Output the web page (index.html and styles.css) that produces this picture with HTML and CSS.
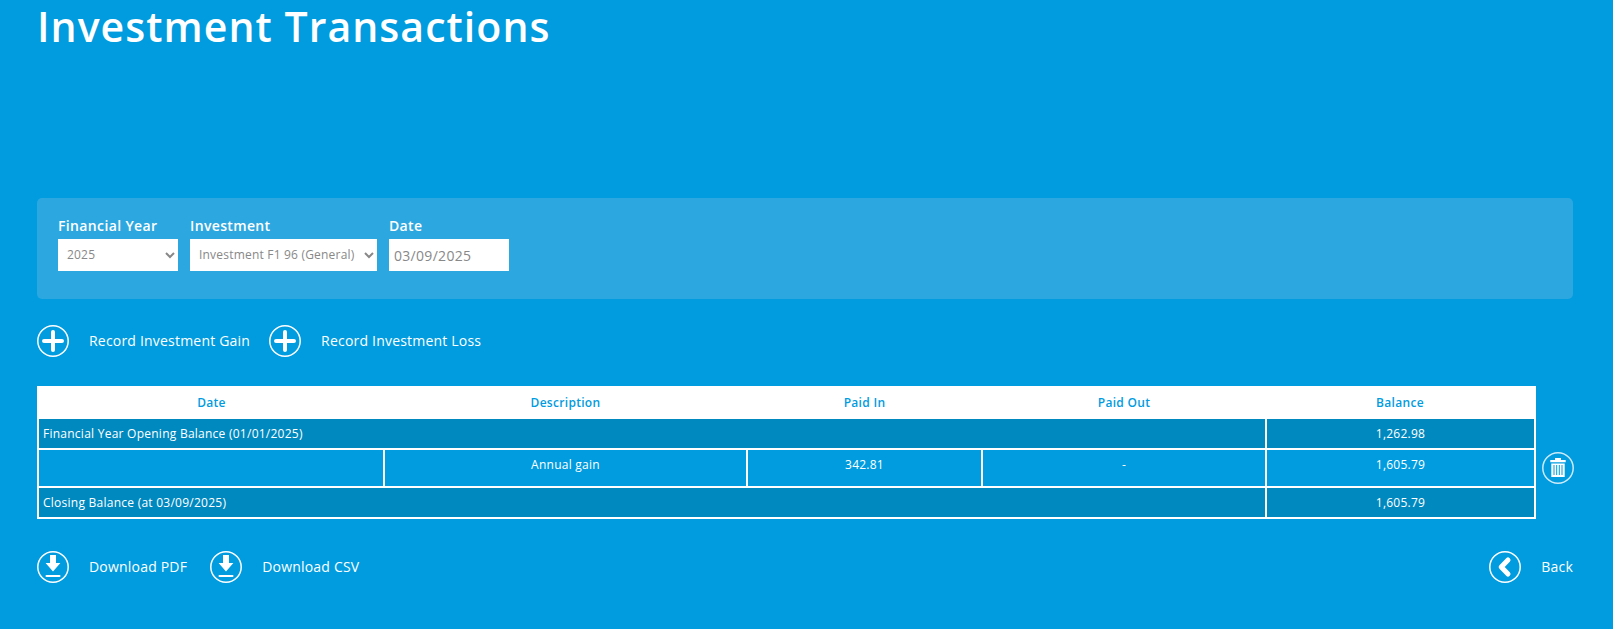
FILE: index.html
```html
<!DOCTYPE html>
<html lang="en">
<head>
<meta charset="utf-8">
<title>Investment Transactions</title>
<link rel="stylesheet" href="styles.css">
</head>
<body>
<main class="page">
  <h1 class="title">Investment Transactions</h1>
  <form class="filters">
    <div class="field">
      <label class="field-label" for="year">Financial Year</label>
      <select class="control select-year" id="year"><option>2025</option></select>
    </div>
    <div class="field">
      <label class="field-label" for="inv">Investment</label>
      <select class="control select-inv" id="inv"><option>Investment F1 96 (General)</option></select>
    </div>
    <div class="field">
      <label class="field-label" for="date">Date</label>
      <input class="control input-date" id="date" type="text" value="03/09/2025">
    </div>
  </form>
  <div class="actions actions-record">
    <a class="action">
      <svg class="icon" viewBox="0 0 32 32"><circle cx="16" cy="16" r="15.2" class="ring"/><path d="M16 7v18M7 16h18" class="bold"/></svg>
      <span class="action-text">Record Investment Gain</span>
    </a>
    <a class="action">
      <svg class="icon" viewBox="0 0 32 32"><circle cx="16" cy="16" r="15.2" class="ring"/><path d="M16 7v18M7 16h18" class="bold"/></svg>
      <span class="action-text">Record Investment Loss</span>
    </a>
  </div>
  <div class="table-row">
    <table class="ledger">
      <colgroup>
        <col class="c-date"><col class="c-desc"><col class="c-in"><col class="c-out"><col class="c-bal">
      </colgroup>
      <thead>
        <tr><th>Date</th><th>Description</th><th>Paid In</th><th>Paid Out</th><th>Balance</th></tr>
      </thead>
      <tbody>
        <tr class="summary"><td colspan="4" class="left">Financial Year Opening Balance (01/01/2025)</td><td>1,262.98</td></tr>
        <tr class="entry"><td></td><td>Annual gain</td><td>342.81</td><td>-</td><td>1,605.79</td></tr>
        <tr class="summary"><td colspan="4" class="left">Closing Balance (at 03/09/2025)</td><td>1,605.79</td></tr>
      </tbody>
    </table>
    <a class="delete">
      <svg class="icon" viewBox="0 0 32 32">
        <circle cx="16" cy="16" r="15.2" class="ring-soft"/>
        <path d="M13 8V6h6v2h4.7v2.2H8.3V8zM9.3 11.4h13.4V25H9.3z" class="fill"/>
        <path d="M12 13v10M14.7 13v10M17.3 13v10M20 13v10" class="slat"/>
      </svg>
    </a>
  </div>
  <div class="actions actions-bottom">
    <div class="group">
      <a class="action">
        <svg class="icon" viewBox="0 0 32 32"><circle cx="16" cy="16" r="15.2" class="ring"/><path d="M13 4h6v8h4.4L16 20.5 8.6 12H13zM8.7 24h14.6v2H8.7z" class="fill"/></svg>
        <span class="action-text">Download PDF</span>
      </a>
      <a class="action">
        <svg class="icon" viewBox="0 0 32 32"><circle cx="16" cy="16" r="15.2" class="ring"/><path d="M13 4h6v8h4.4L16 20.5 8.6 12H13zM8.7 24h14.6v2H8.7z" class="fill"/></svg>
        <span class="action-text">Download CSV</span>
      </a>
    </div>
    <a class="action">
      <svg class="icon" viewBox="0 0 32 32"><circle cx="16" cy="16" r="15.2" class="ring"/><path d="M19 9 12.2 16l6.8 7" class="chev"/></svg>
      <span class="action-text">Back</span>
    </a>
  </div>
</main>
</body>
</html>
```
FILE: styles.css
```css
* { box-sizing: border-box; }
html, body { margin: 0; height: 100%; }
body {
  background: #009cdf;
  color: #fff;
  font-family: "Open Sans", "Noto Sans", sans-serif;
  font-size: 14px;
  overflow: hidden;
}
.page { padding: 0 40px 0 37px; }
.title {
  margin: 0;
  height: 198px;
  font-size: 41px;
  line-height: 53px;
  font-weight: 600;
  letter-spacing: 1.05px;
}
.filters {
  display: flex;
  gap: 12px;
  height: 101px;
  padding: 18px 21px;
  background: #2da7e0;
  border-radius: 5px;
}
.field { display: flex; flex-direction: column; }
.field-label {
  font-weight: 600;
  font-size: 14px;
  line-height: 20px;
  letter-spacing: 0.36px;
  margin-bottom: 3px;
}
.control {
  height: 32px;
  border: 0;
  border-radius: 0;
  background-color: #fff;
  color: #888;
  font-family: inherit;
}
.select-year { width: 120px; font-size: 12px; padding: 0 0 2px 5px; letter-spacing: 0.2px; }
.select-inv { width: 187px; font-size: 12px; padding: 0 0 2px 5px; letter-spacing: 0.2px; }
.input-date { width: 120px; font-size: 14px; padding: 0 5px; letter-spacing: 0.3px; }
.actions { display: flex; align-items: center; }
.actions-record { gap: 19px; margin-top: 26px; }
.action { display: flex; align-items: center; gap: 20px; letter-spacing: 0.2px; }
.action-text { padding-bottom: 2px; }
.icon { width: 32px; height: 32px; flex: none; display: block; }
.ring { fill: none; stroke: #fff; stroke-width: 1.5; }
.ring-soft { fill: none; stroke: #cdebf8; stroke-width: 1.5; }
.bold { fill: none; stroke: #fff; stroke-width: 4; stroke-linecap: round; }
.fill { fill: #fff; }
.slat { fill: none; stroke: #009cdf; stroke-width: 1; }
.chev { fill: none; stroke: #fff; stroke-width: 5; stroke-linecap: round; stroke-linejoin: round; }
.table-row { display: flex; align-items: flex-start; gap: 6px; margin-top: 29px; }
.ledger {
  width: 1497px;
  table-layout: fixed;
  border-collapse: collapse;
  font-size: 12px;
}
.c-date { width: 346px; }
.c-desc { width: 363px; }
.c-in { width: 235px; }
.c-out { width: 284px; }
.c-bal { width: 269px; }
.ledger th {
  height: 32px;
  padding: 1px 0 0;
  background: #fff;
  color: #009cdf;
  font-weight: 600;
  letter-spacing: 0.3px;
  text-align: center;
}
.ledger td {
  border: 2px solid #fff;
  padding: 0 4px;
  text-align: center;
  letter-spacing: 0.25px;
}
.ledger th:first-child { border-left: 2px solid #fff; }
.ledger th:last-child { border-right: 2px solid #fff; }
.ledger td.left { text-align: left; }
.summary td { height: 31px; background: #0089bf; }
.entry td { height: 38px; background: #009cdf; vertical-align: top; padding-top: 6px; }
.delete { display: block; margin-top: 66px; }
.actions-bottom { justify-content: space-between; margin-top: 32px; }
.group { display: flex; gap: 23px; }
```
